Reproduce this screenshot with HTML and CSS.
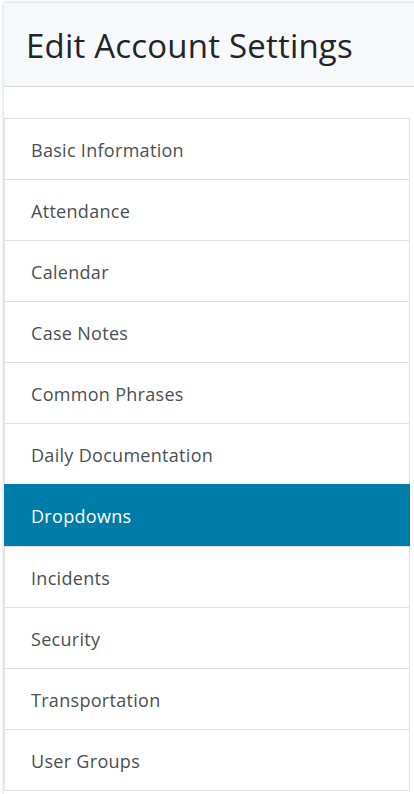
FILE: index.html
```html
<!DOCTYPE html>
<html>
<head>
<meta charset="utf-8">
<link rel="stylesheet" href="styles.css">
</head>
<body>
<div class="card">
  <div class="card-header"><h2 class="title">Edit Account Settings</h2></div>
  <ul class="list">
    <li class="item">Basic Information</li>
    <li class="item">Attendance</li>
    <li class="item">Calendar</li>
    <li class="item">Case Notes</li>
    <li class="item">Common Phrases</li>
    <li class="item">Daily Documentation</li>
    <li class="item active">Dropdowns</li>
    <li class="item">Incidents</li>
    <li class="item">Security</li>
    <li class="item">Transportation</li>
    <li class="item">User Groups</li>
  </ul>
</div>
</body>
</html>
```
FILE: styles.css
```css
html, body {
  margin: 0;
  padding: 0;
  background: #ffffff;
  font-family: "Open Sans", "Noto Sans", sans-serif;
}
.card {
  margin: 3px 0 0 4px;
  width: 420px;
  min-height: 800px;
  background: #fff;
  box-shadow: 0 0 4px rgba(0, 0, 0, 0.22);
}
.card-header {
  height: 83px;
  background: #f7f8fa;
  border-bottom: 1px solid #d5d8dc;
  display: flex;
  align-items: center;
  padding-left: 22px;
}
.title {
  margin: 2px 0 0 0;
  font-weight: 400;
  font-size: 33px;
  color: #212529;
  letter-spacing: 0.2px;
}
.list {
  list-style: none;
  margin: 31px 0 0 0;
  padding: 0;
  width: 406px;
}
.item {
  height: 59px;
  display: flex;
  align-items: center;
  padding-left: 26px;
  padding-top: 1px;
  box-sizing: content-box;
  border: 1px solid #dfdfdf;
  margin-top: -1px;
  font-size: 18px;
  letter-spacing: 0.3px;
  color: #4a4f55;
}
.item:first-child { margin-top: 0; }
.item.active {
  background: #007ca8;
  border-color: #007ca8;
  color: #fff;
  height: 60px;
}
```
